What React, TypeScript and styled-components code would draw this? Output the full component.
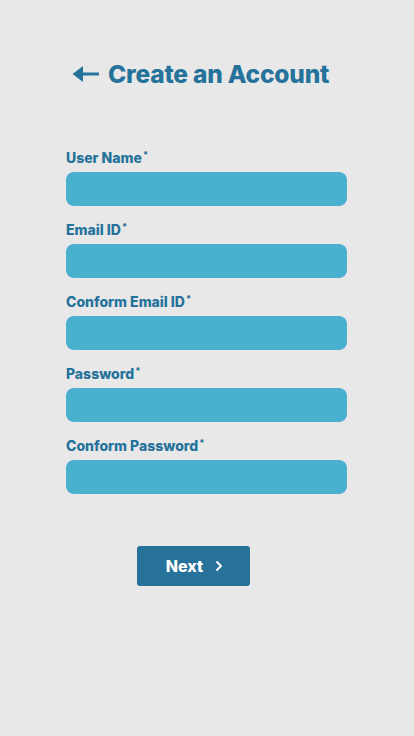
import styled, { createGlobalStyle } from 'styled-components';

const GlobalStyle = createGlobalStyle`
  body {
    margin: 0;
    background: #e8e8e8;
    font-family: Inter, "Noto Sans", sans-serif;
  }
`;

const Page = styled.div`
  width: 414px;
  height: 736px;
  box-sizing: border-box;
  padding-left: 66px;
  background: #e8e8e8;
  display: flex;
  flex-direction: column;
  align-items: flex-start;
`;

const Header = styled.h1`
  margin: 59px 0 0 6px;
  display: flex;
  align-items: center;
  gap: 9px;
  color: #25729b;
  font-size: 24.5px;
  font-weight: 800;
  letter-spacing: -0.2px;
  line-height: 30px;
`;

const Form = styled.form`
  margin-top: 61px;
  width: 281px;
  display: flex;
  flex-direction: column;
  gap: 16px;
`;

const Field = styled.div`
  display: flex;
  flex-direction: column;
  gap: 6px;
`;

const Label = styled.label`
  color: #25729b;
  font-size: 14px;
  font-weight: 800;
  letter-spacing: 0;
  line-height: 16px;
`;

const Star = styled.sup`
  font-size: 9px;
  vertical-align: top;
  line-height: 10px;
  margin-left: 1px;
`;

const Input = styled.input`
  height: 34px;
  border: none;
  border-radius: 8px;
  background: #4ab0cf;
  outline: none;
  padding: 0 12px;
  box-sizing: border-box;
`;

const Button = styled.button`
  margin: 52px 0 0 71px;
  width: 113px;
  height: 40px;
  border: none;
  border-radius: 3px;
  background: #26729a;
  color: #fff;
  font-family: Inter, sans-serif;
  font-size: 16px;
  font-weight: 800;
  display: flex;
  align-items: center;
  justify-content: center;
  gap: 12px;
  padding: 0 0 0 2px;
`;

const fields = ['User Name', 'Email ID', 'Conform Email ID', 'Password', 'Conform Password'];

const App = () => {
  return (
    <Page>
      <GlobalStyle />
      <Header>
        <svg width="27" height="18" viewBox="0 0 27 18">
          <path d="M0.5 9 L11 1 V7.5 H27 V10.5 H11 V17 Z" fill="#25729b" />
        </svg>
        Create an Account
      </Header>
      <Form>
        {fields.map((f) => (
          <Field key={f}>
            <Label>
              {f}
              <Star>*</Star>
            </Label>
            <Input type={f.includes('Password') ? 'password' : 'text'} />
          </Field>
        ))}
      </Form>
      <Button type="button">
        Next
        <svg width="8" height="12" viewBox="0 0 8 12">
          <path d="M1.5 1.5 L6 6 L1.5 10.5" stroke="#fff" strokeWidth="2" fill="none" />
        </svg>
      </Button>
    </Page>
  );
};

export default App;
